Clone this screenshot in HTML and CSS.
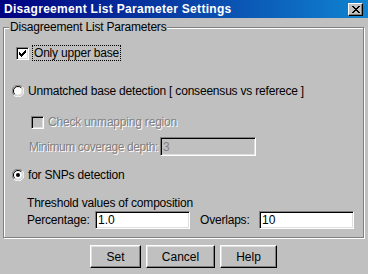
FILE: index.html
```html
<!DOCTYPE html>
<html lang="en">
<head>
  <meta charset="UTF-8">
  <title>Disagreement List Parameter Settings</title>
  <link rel="stylesheet" href="styles.css">
</head>
<body>
  <div class="window">
    <div class="titlebar">
      <span class="title">Disagreement List Parameter Settings</span>
      <span class="close">
        <svg width="8" height="7" viewBox="0 0 8 7">
          <path d="M0 0h2v1h-2z M6 0h2v1h-2z M1 1h2v1h-2z M5 1h2v1h-2z M2 2h4v1h-4z M3 3h2v1h-2z M2 4h4v1h-4z M1 5h2v1h-2z M5 5h2v1h-2z M0 6h2v1h-2z M6 6h2v1h-2z" fill="#000"/>
        </svg>
      </span>
    </div>

    <fieldset class="group">
      <legend>Disagreement List Parameters</legend>

      <div class="row row-upper">
        <span class="check">
          <svg width="9" height="9" viewBox="0 0 9 9">
            <path d="M1 3h1v3h-1z M2 4h1v3h-1z M3 5h1v3h-1z M4 4h1v3h-1z M5 3h1v3h-1z M6 2h1v3h-1z M7 1h1v3h-1z" fill="#000"/>
          </svg>
        </span>
        <span class="focus">Only upper base</span>
      </div>

      <div class="row row-unmatched">
        <span class="radio">
          <svg width="12" height="12" viewBox="0 0 12 12">
            <path d="M10.2 1.8A5.6 5.6 0 0 0 1.8 10.2" stroke="#808080" fill="none"/>
            <path d="M1.8 10.2A5.6 5.6 0 0 0 10.2 1.8" stroke="#fff" fill="none"/>
            <path d="M9.2 2.8A4.4 4.4 0 0 0 2.8 9.2" stroke="#000" fill="none"/>
            <path d="M2.8 9.2A4.4 4.4 0 0 0 9.2 2.8" stroke="#dfdfdf" fill="none"/>
            <circle cx="6" cy="6" r="3.8" fill="#fff"/>
          </svg>
        </span>
        <span>Unmatched base detection [ conseensus vs referece ]</span>
      </div>

      <div class="row row-unmapping disabled">
        <span class="check check-off"></span>
        <span>Check unmapping region</span>
      </div>

      <div class="row row-depth disabled">
        <span class="label label-depth">Minimum coverage depth:</span>
        <input class="field field-depth" type="text" value="3" disabled>
      </div>

      <div class="row row-snps">
        <span class="radio">
          <svg width="12" height="12" viewBox="0 0 12 12">
            <path d="M10.2 1.8A5.6 5.6 0 0 0 1.8 10.2" stroke="#808080" fill="none"/>
            <path d="M1.8 10.2A5.6 5.6 0 0 0 10.2 1.8" stroke="#fff" fill="none"/>
            <path d="M9.2 2.8A4.4 4.4 0 0 0 2.8 9.2" stroke="#000" fill="none"/>
            <path d="M2.8 9.2A4.4 4.4 0 0 0 9.2 2.8" stroke="#dfdfdf" fill="none"/>
            <circle cx="6" cy="6" r="3.8" fill="#fff"/>
            <circle cx="6" cy="6" r="2" fill="#000"/>
          </svg>
        </span>
        <span>for SNPs detection</span>
      </div>

      <div class="row row-threshold">Threshold values of composition</div>

      <div class="row row-values">
        <span class="label label-pct">Percentage:</span>
        <input class="field field-pct" type="text" value="1.0">
        <span class="label label-overlap">Overlaps:</span>
        <input class="field field-overlap" type="text" value="10">
      </div>
    </fieldset>

    <div class="buttons">
      <button class="btn btn-set">Set</button>
      <button class="btn btn-cancel">Cancel</button>
      <button class="btn btn-help">Help</button>
    </div>
  </div>
</body>
</html>
```

FILE: styles.css
```css
body {
  margin: 0;
}
.window {
  width: 368px;
  height: 274px;
  background: #c0c0c0;
  font-family: "Liberation Sans", Arial, sans-serif;
  font-size: 12px;
  letter-spacing: -0.2px;
  color: #000;
  overflow: hidden;
}
.titlebar {
  height: 18px;
  display: flex;
  align-items: center;
  justify-content: space-between;
  padding: 0 5px 0 4px;
  background: linear-gradient(to right, #000080, #1084d0);
}
.title {
  color: #fff;
  font-weight: bold;
  letter-spacing: 0.3px;
}
.close {
  width: 15px;
  height: 13px;
  box-sizing: border-box;
  display: flex;
  align-items: center;
  justify-content: center;
  background: #c0c0c0;
  border: 1px solid;
  border-color: #fff #000 #000 #fff;
  box-shadow: inset -1px -1px 0 #808080;
}
.close svg {
  display: block;
}

.group {
  margin: 2px 4px 0 3px;
  padding: 10px 0 8px 8px;
  border: 1px solid #808080;
  box-shadow: inset 1px 1px 0 #fff, 1px 1px 0 #fff;
  min-width: 0;
  display: flex;
  flex-direction: column;
}
legend {
  margin-left: -3px;
  padding: 0 1px;
  line-height: 15px;
  background: #c0c0c0;
}
.row {
  display: flex;
  align-items: center;
  height: 16px;
  white-space: nowrap;
}
.row-upper {
  margin-left: 4px;
}
.row-unmatched {
  margin-top: 22px;
}
.row-unmapping {
  margin-top: 15px;
  margin-left: 19px;
}
.row-depth {
  margin-top: 7px;
  margin-left: 17px;
  height: 19px;
}
.row-snps {
  margin-top: 11px;
}
.row-threshold {
  margin-top: 12px;
  margin-left: 15px;
}
.row-values {
  margin-left: 15px;
  height: 18px;
}

.check {
  width: 13px;
  height: 13px;
  box-sizing: border-box;
  padding: 1px;
  margin-right: 4px;
  background: #fff;
  border: 1px solid;
  border-color: #808080 #fff #fff #808080;
  box-shadow: inset 1px 1px 0 #000, inset -1px -1px 0 #dfdfdf;
}
.check svg {
  display: block;
}
.check-off {
  background: #c0c0c0;
}
.radio {
  width: 12px;
  height: 12px;
  margin-right: 4px;
}
.radio svg {
  display: block;
}
.focus {
  outline: 1px dotted #000;
  padding: 0 1px;
}
.disabled {
  color: #808080;
  text-shadow: 1px 1px 0 #fff;
}

.label {
  flex-shrink: 0;
}
.label-depth {
  width: 131px;
  letter-spacing: -0.4px;
}
.label-pct {
  width: 68px;
}
.label-overlap {
  width: 59px;
  margin-left: 10px;
}
.field {
  flex-shrink: 0;
  box-sizing: border-box;
  height: 100%;
  margin: 0;
  padding: 0 2px;
  font: inherit;
  color: #000;
  background: #fff;
  border: 1px solid;
  border-color: #808080 #fff #fff #808080;
  box-shadow: inset 1px 1px 0 #000, inset -1px -1px 0 #dfdfdf;
  outline: none;
}
.field-depth {
  width: 96px;
  background: #c0c0c0;
  color: #808080;
  text-shadow: none;
}
.field-pct {
  width: 95px;
}
.field-overlap {
  width: 95px;
}

.buttons {
  display: flex;
  gap: 5px;
  padding-left: 90px;
  margin-top: 7px;
}
.btn {
  height: 23px;
  box-sizing: border-box;
  padding: 0;
  font: inherit;
  color: #000;
  background: #c0c0c0;
  border: 1px solid;
  border-color: #fff #000 #000 #fff;
  box-shadow: inset -1px -1px 0 #808080, inset 1px 1px 0 #dfdfdf;
}
.btn-set {
  width: 51px;
}
.btn-cancel {
  width: 69px;
}
.btn-help {
  width: 57px;
}
```
